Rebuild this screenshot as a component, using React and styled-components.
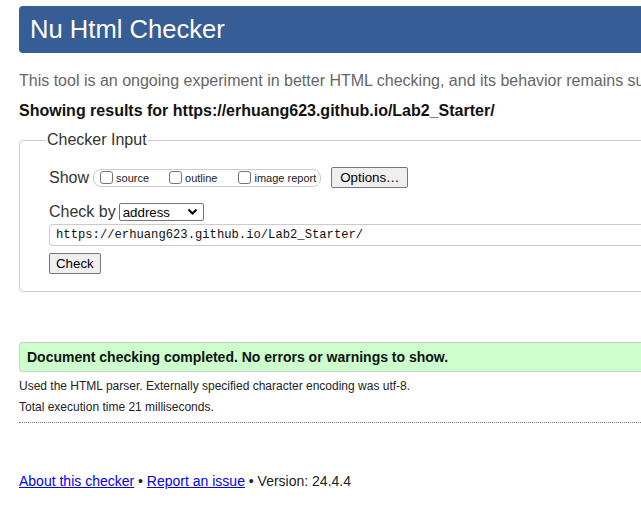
import React from 'react';
import styled, { createGlobalStyle } from 'styled-components';

const Global = createGlobalStyle`
    html, body {
        margin: 0;
        padding: 0;
        overflow: hidden;
        background: #fff;
    }
    body {
        font-family: 'Liberation Sans', Arial, sans-serif;
        color: #222;
    }
`;

const Page = styled.div`
    width: 760px;
    padding: 6px 0 0 19px;
`;

const Header = styled.h1`
    margin: 0;
    height: 47px;
    padding: 0 11px;
    display: flex;
    align-items: center;
    background: #365d95;
    color: #fff;
    font-weight: normal;
    font-size: 25.6px;
    border-radius: 4px 0 0 4px;
`;

const Intro = styled.p`
    margin: 18px 0 0;
    font-size: 16px;
    line-height: 20px;
    color: #666;
    white-space: nowrap;
    overflow: hidden;
`;

const Results = styled.h2`
    margin: 10px 0 0;
    font-size: 16px;
    line-height: 20px;
    font-weight: bold;
    color: #111;
`;

const Fieldset = styled.fieldset`
    margin: 10px 0 0;
    padding: 18px 0 17px 29px;
    border: 1px solid #ccc;
    border-radius: 4px;
    min-width: 0;
`;

const Legend = styled.legend`
    margin-left: -3px;
    padding: 0 1px;
    font-size: 16px;
    color: #333;
`;

const Row = styled.div`
    display: flex;
    align-items: center;
    margin-top: ${p => p.top || 0}px;
    font-size: 16px;
    color: #333;
`;

const Group = styled.div`
    display: flex;
    align-items: center;
    height: 16px;
    padding: 0 4px;
    border: 1px solid #ccc;
    border-radius: 8px;
    margin-left: 4px;
`;

const Option = styled.label`
    display: flex;
    align-items: center;
    font-size: 11px;
    color: #222;
    margin-right: ${p => p.gap || 0}px;
`;

const Box = styled.span`
    display: inline-block;
    width: 11px;
    height: 11px;
    border: 1px solid #767676;
    border-radius: 3px;
    margin: 0 3px 0 2px;
    background: #fff;
`;

const Button = styled.button`
    font-family: 'Liberation Sans', Arial, sans-serif;
    font-size: 13.3px;
    color: #000;
    height: 21px;
    padding: 0 ${p => p.pad || 6}px;
    border: 1px solid #767676;
    border-radius: 2px;
    background: #efefef;
    margin-left: ${p => p.left || 0}px;
`;

const Select = styled.div`
    display: flex;
    align-items: center;
    justify-content: space-between;
    width: 85px;
    height: 18px;
    margin-left: 3px;
    padding: 0 5px 0 3px;
    box-sizing: border-box;
    border: 1px solid #767676;
    border-radius: 2px;
    font-size: 13.3px;
    color: #000;
`;

const UrlInput = styled.div`
    margin-top: 3px;
    height: 20px;
    display: flex;
    align-items: center;
    padding-left: 6px;
    border: 1px solid #ccc;
    border-right: none;
    border-radius: 4px 0 0 4px;
    font-family: 'Liberation Mono', 'DejaVu Sans Mono', monospace;
    font-size: 12.2px;
    color: #111;
`;

const Success = styled.div`
    margin-top: 50px;
    height: 28px;
    display: flex;
    align-items: center;
    padding-left: 7px;
    background: #ccffcc;
    border: 1px solid #ccc;
    border-right: none;
    border-radius: 4px 0 0 4px;
    font-size: 14px;
    font-weight: bold;
    color: #111;
`;

const Detail = styled.p`
    margin: ${p => p.top}px 0 0;
    font-size: 12px;
    line-height: 14px;
    color: #222;
`;

const Rule = styled.hr`
    margin: 8px 0 0;
    border: none;
    border-top: 1px dotted #777;
`;

const Footer = styled.p`
    margin: 50px 0 0;
    font-size: 14px;
    color: #222;
    & a {
        color: #0000ee;
        text-decoration: underline;
    }
`;

export default function App() {
    return (
        <Page>
            <Global />
            <Header>Nu Html Checker</Header>
            <Intro>
                This tool is an ongoing experiment in better HTML checking, and its behavior remains subject to change
            </Intro>
            <Results>Showing results for https://erhuang623.github.io/Lab2_Starter/</Results>
            <Fieldset>
                <Legend>Checker Input</Legend>
                <Row>
                    Show
                    <Group>
                        <Option gap={18}><Box />source</Option>
                        <Option gap={19}><Box />outline</Option>
                        <Option><Box />image report</Option>
                    </Group>
                    <Button left={10} pad={8}>Options…</Button>
                </Row>
                <Row top={15}>
                    Check by
                    <Select>
                        address
                        <svg width="11" height="8" viewBox="0 0 11 8">
                            <path d="M1.5 1.5 L5.5 5.5 L9.5 1.5" fill="none" stroke="#000" strokeWidth="2" />
                        </svg>
                    </Select>
                </Row>
                <UrlInput>https://erhuang623.github.io/Lab2_Starter/</UrlInput>
                <Row top={7}>
                    <Button>Check</Button>
                </Row>
            </Fieldset>
            <Success>Document checking completed. No errors or warnings to show.</Success>
            <Detail top={7}>Used the HTML parser. Externally specified character encoding was utf-8.</Detail>
            <Detail top={7}>Total execution time 21 milliseconds.</Detail>
            <Rule />
            <Footer>
                <a href="#">About this checker</a> • <a href="#">Report an issue</a> • Version: 24.4.4
            </Footer>
        </Page>
    );
}
